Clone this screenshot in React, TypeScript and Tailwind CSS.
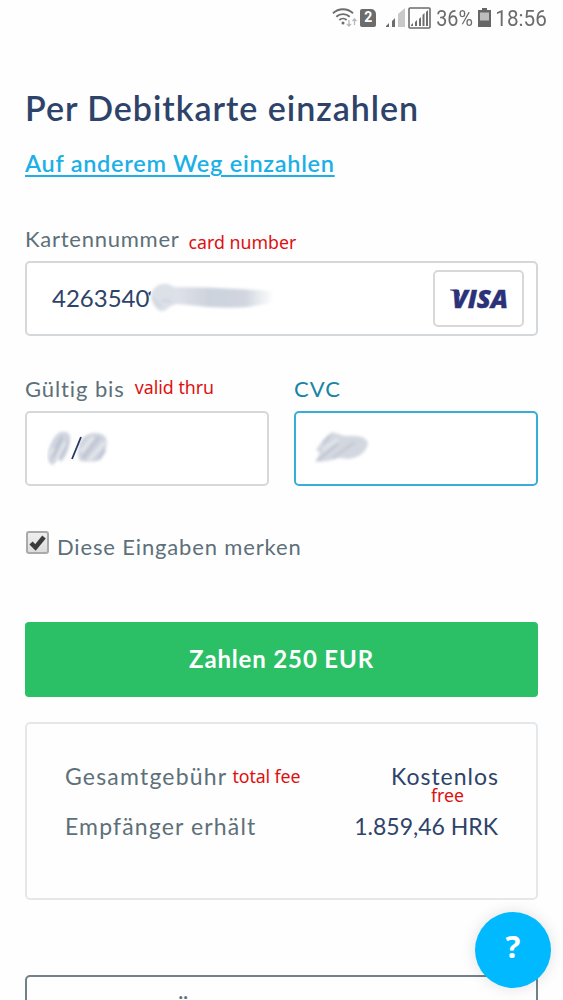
import type { ReactNode } from 'react'

function Note({ children, className = '' }: { children: ReactNode; className?: string }) {
  return (
    <span className={`font-['Noto_Sans','Open_Sans',sans-serif] text-[17.75px] leading-6 whitespace-nowrap text-[#dd1010] ${className}`}>
      {children}
    </span>
  )
}

function StatusBar() {
  return (
    <header className="flex h-[37px] items-center justify-end pr-4 font-['Roboto',sans-serif] text-[22px] text-[#6c6c6c]">
      <svg className="-mt-[3px]" width="27" height="22" viewBox="0 0 27 22" fill="none" stroke="#6c6c6c" strokeWidth="1.9">
        <path d="M1 7.3a14.5 14.5 0 0 1 20 0M4.3 10.8a9.8 9.8 0 0 1 13.4 0M7.4 14a5.3 5.3 0 0 1 7.2 0" />
        <circle cx="11" cy="17" r="1.5" fill="#6c6c6c" stroke="none" />
        <path d="M17 14v6m-2-2 2 2 2-2M22.500 19v-6m-2 2 2-2 2 2" stroke="#b8b8b8" strokeWidth="1.3" />
      </svg>
      <span className="-mt-[2px] ml-[1px] flex h-[18px] w-4 items-center justify-center rounded-[2px] rounded-tr-[5px] bg-[#6c6c6c] text-[14px] font-bold text-white">
        2
      </span>
      <svg className="-mt-[2px] ml-[10px]" width="19" height="20" viewBox="0 0 19 20">
        <path d="M0 19v-1l3-3v4zM6 19v-6l3-3v9z" fill="#6c6c6c" />
        <path d="M12 19V6l7-6v19z" fill="#c9c9c9" />
      </svg>
      <svg className="-mt-[2px] ml-[3px]" width="23" height="22" viewBox="0 0 23 22" fill="#6c6c6c">
        <rect x="1" y="1" width="21" height="20" rx="1" fill="none" stroke="#6c6c6c" strokeWidth="1.6" />
        <path d="M3 19v-1l2-2v3zM7 19v-4l2-2v6zM11 19v-7l2-2v9zM14.500 19V8l2-2v13zM18 19V5l2-2v16z" />
      </svg>
      <span className="-mr-px ml-0 w-[42px] origin-right scale-x-90 text-right">36%</span>
      <svg className="-mt-[2px] ml-[6px]" width="13" height="19" viewBox="0 0 13 19">
        <path d="M4 0h5v2h4v17H0V2h4z" fill="#666" />
        <path d="M2 4.500h9v8H2z" fill="#bdbdbd" />
      </svg>
      <span className="ml-[1px] origin-right scale-x-94">18:56</span>
    </header>
  )
}

function VisaLogo() {
  return (
    <svg width="62" height="40" viewBox="0 0 62 40">
      <text
        x="4"
        y="28.500"
        fontFamily="Open Sans, sans-serif"
        fontSize="24.500"
        fontWeight="800"
        fontStyle="italic"
        fill="#2b3279"
        stroke="#2b3279"
        strokeWidth="0.4"
        textLength="56"
        lengthAdjust="spacingAndGlyphs"
      >
        VISA
      </text>
      <path d="M2 10.500h7q2 0 2.300 2.500l1 5Q9 12.500 2 11.300z" fill="#2b3279" />
    </svg>
  )
}

function NumberSmudge() {
  return (
    <svg className="-mt-[3px] -ml-px" width="128" height="36" viewBox="0 0 128 36">
      <defs>
        <linearGradient id="numberFade" x1="0" x2="1">
          <stop offset="0" stopColor="#e3e6ec" />
          <stop offset="0.4" stopColor="#cdd3dd" />
          <stop offset="0.75" stopColor="#d0d5df" />
          <stop offset="1" stopColor="#d8dce4" stopOpacity="0.1" />
        </linearGradient>
        <filter id="soft" x="-20%" y="-40%" width="140%" height="180%">
          <feGaussianBlur stdDeviation="1.400" />
        </filter>
      </defs>
      <g filter="url(#soft)">
        <path d="M20 8Q60 8 92 10l32 2v12l-24 4Q70 30 40 26L18 24z" fill="url(#numberFade)" />
        <path d="M3 14Q9 3 20 5l8 4-2 8 3 8q-6 1-10 5-5 4-9 1-7-6-7-14z" fill="#dce0e7" />
        <path d="M5 19q4 6 8 9M14 22q5-1 9 1" fill="none" stroke="#c2c9d5" strokeWidth="1.300" />
      </g>
      <path d="M0 14l3-2-1 5z" fill="#2e4369" />
    </svg>
  )
}

function ExpirySmudge() {
  return (
    <svg className="mt-px" width="64" height="40" viewBox="0 0 64 40">
      <g filter="url(#soft)">
        <path d="M1 24Q4 9 13 3q12-2 10 9-1 13-9 21l-3-3-5 6q-6-1-5-12z" fill="#cfd4de" />
        <path d="M5 28 15 8M13 29l8-17" stroke="#b3bbc9" strokeWidth="2.200" />
        <path d="M10 30 19 13M3 27l4-8" stroke="#eef0f4" strokeWidth="2" />
        <path d="M33 13q5-9 15-9 11 0 12 9-1 13-9 19-9 1-18 0-4-7 0-19z" fill="#cfd4de" />
        <path d="M36 29 52 8M52 30l6-9" stroke="#bdc4d1" strokeWidth="3" />
        <path d="M34 23 46 8M42 31 58 13" stroke="#e6e9ee" strokeWidth="3" />
      </g>
      <path d="M25 30 34 8" stroke="#23385f" strokeWidth="1.800" />
    </svg>
  )
}

function CvcSmudge() {
  return (
    <svg className="-mt-px" width="58" height="36" viewBox="0 0 58 36">
      <g filter="url(#soft)">
        <path d="M1 32 6 23l-4-3Q11 6 18 2l13 4q21-2 23 7-2 13-19 16l-10-1Q13 32 1 32z" fill="#d3d8e0" />
        <path d="M4 30 24 14M9 13l7-7" stroke="#afb6c4" strokeWidth="1.500" />
        <path d="M19 28 41 12" stroke="#c5cbd6" strokeWidth="3" />
        <path d="M9 20 24 9" stroke="#e9ecf0" strokeWidth="2" />
      </g>
    </svg>
  )
}

export default function App() {
  return (
    <div className="relative h-[1000px] w-[563px] overflow-hidden bg-[#fefefe] font-['Lato',sans-serif] text-[22px] text-[#5d7079]">
      <StatusBar />

      <main className="px-[25px]">
        <h1 className="mt-[50px] text-[34px] leading-[42px] font-semibold tracking-[0.97px] whitespace-nowrap text-[#2e4369]">
          Per Debitkarte einzahlen
        </h1>
        <a href="#" className="mt-[19px] block w-fit text-[23.5px] leading-[30px] font-semibold tracking-[0.72px] whitespace-nowrap text-[#1cb0e6] underline decoration-2 underline-offset-[3px]">
          Auf anderem Weg einzahlen
        </a>

        {/* Card number */}
        <div className="mt-[46px] flex h-[37px] items-start">
          <label className="leading-[30px] tracking-[0.75px]">Kartennummer</label>
          <Note className="mt-[6px] ml-[9px]">card number</Note>
        </div>
        <div className="flex h-[75px] items-center rounded-[5px] border-2 border-[#d5d8da] bg-white pr-3 pl-[25px]">
          <span className="-mt-[2px] text-[24px] text-[#2e4369]">4263540</span>
          <NumberSmudge />
          <div className="ml-auto flex h-[57px] w-[91px] items-center justify-center rounded-[5px] border-2 border-[#d8d8d8]">
            <VisaLogo />
          </div>
        </div>

        {/* Expiry and CVC */}
        <div className="mt-[38px] grid grid-cols-2 gap-[25px]">
          <div>
            <div className="flex h-[37px] items-start">
              <label className="leading-[30px] tracking-[0.9px]">Gültig bis</label>
              <Note className="mt-[1px] ml-[10px]">valid thru</Note>
            </div>
            <div className="flex h-[75px] items-center rounded-[5px] border-2 border-[#d5d8da] bg-white pl-[20px]">
              <ExpirySmudge />
            </div>
          </div>
          <div>
            <div className="flex h-[37px] items-start">
              <label className="leading-[30px] tracking-[1px] text-[#1884a6]">CVC</label>
            </div>
            <div className="flex h-[75px] items-center rounded-[5px] border-2 border-[#37aed8] bg-white pl-[18px]">
              <CvcSmudge />
            </div>
          </div>
        </div>

        {/* Remember checkbox */}
        <div className="mt-[45px] flex h-[30px] items-start">
          <span className="ml-[1px] flex size-[23px] items-center justify-center rounded-[3px] border-2 border-[#aaa] bg-linear-to-b from-[#eee] to-[#ddd]">
            <svg width="17" height="17" viewBox="0 0 17 17">
              <path d="m2 9 4.500 4.500L15 3" fill="none" stroke="#3c3c3c" strokeWidth="4.500" />
            </svg>
          </span>
          <span className="ml-[8px] leading-[32px] tracking-[0.85px]">Diese Eingaben merken</span>
        </div>

        <button className="mt-[61px] block h-[75px] w-full rounded-[4px] bg-[#2bbf66] pb-[2px] text-[24px] font-bold tracking-[0.85px] text-white">
          Zahlen 250 EUR
        </button>

        {/* Fee summary */}
        <section className="mt-[25px] h-[178px] rounded-[5px] border-2 border-[#e5e8ea] px-[38px] pt-[37px] text-[23px]">
          <div className="flex h-[50px] items-start leading-[30px]">
            <span className="tracking-[1.2px]">Gesamtgebühr</span>
            <Note className="mt-[3px] ml-[5px] tracking-[-0.1px]">total fee</Note>
            <div className="ml-auto flex flex-col items-end">
              <span className="-mr-px tracking-[1px] text-[#2e4369]">Kostenlos</span>
              <Note className="-mt-[8px] mr-[34px]">free</Note>
            </div>
          </div>
          <div className="flex justify-between leading-[30px]">
            <span className="tracking-[1.15px]">Empfänger erhält</span>
            <span className="text-[#2e4369]">1.859,46 HRK</span>
          </div>
        </section>

        <div className="mt-[75px] h-[75px] rounded-[5px] border-2 border-[#718389] pt-[15px] pl-[148px] font-bold">
          Ü
        </div>
      </main>

      <button className="absolute top-[912px] left-[475px] flex size-[76px] justify-center rounded-full bg-[#00b9ff] font-['Noto_Sans',sans-serif] text-[31px] leading-[68px] font-bold text-white shadow-[0_0_15px_rgba(0,0,0,0.12)]">
        ?
      </button>
    </div>
  )
}
